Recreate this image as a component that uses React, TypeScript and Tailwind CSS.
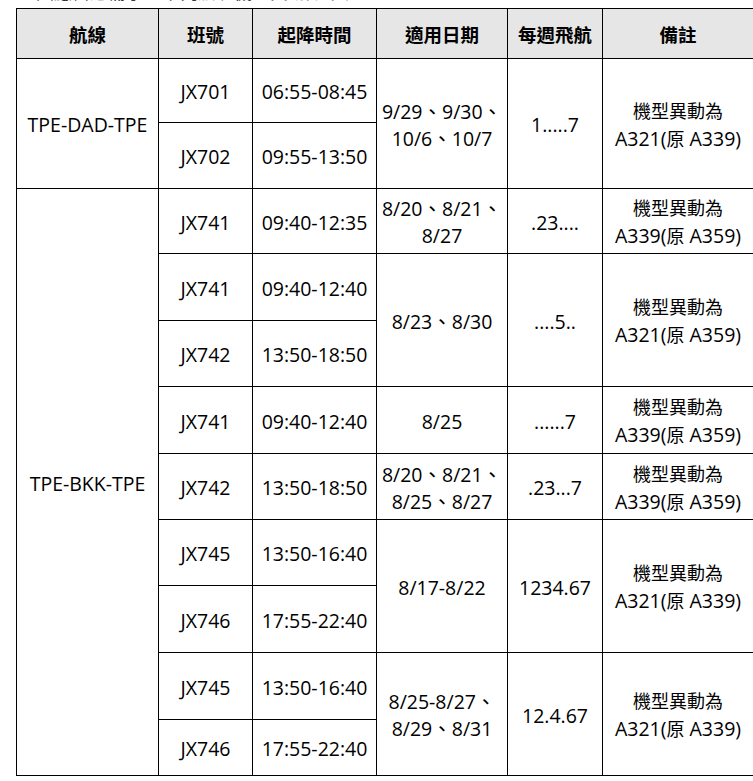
const font = { fontFamily: "'Open Sans', 'Noto Sans CJK TC', sans-serif" };

type Cell = { text: React.ReactNode; rowSpan?: number };

// CJK glyphs sit a little smaller than the Latin text in the source table
const C = ({ children }: { children: React.ReactNode }) => (
  <span className="text-[18px]">{children}</span>
);

const remark = (model: string, orig: string) => (
  <>
    <C>機型異動為</C>
    <br />
    {model}(<C>原</C> {orig})
  </>
);

const rowHeights = [64, 66, 65, 67, 66, 67, 66, 66, 67, 67, 56];

// each row lists only the cells that start in it (rowspans handled by the table)
const rows: Cell[][] = [
  [
    { text: 'TPE-DAD-TPE', rowSpan: 2 },
    { text: 'JX701' },
    { text: '06:55-08:45' },
    { text: <>9/29、9/30、<br />10/6、10/7</>, rowSpan: 2 },
    { text: '1.....7', rowSpan: 2 },
    { text: remark('A321', 'A339'), rowSpan: 2 },
  ],
  [{ text: 'JX702' }, { text: '09:55-13:50' }],
  [
    { text: 'TPE-BKK-TPE', rowSpan: 9 },
    { text: 'JX741' },
    { text: '09:40-12:35' },
    { text: <>8/20、8/21、<br />8/27</> },
    { text: '.23....' },
    { text: remark('A339', 'A359') },
  ],
  [
    { text: 'JX741' },
    { text: '09:40-12:40' },
    { text: '8/23、8/30', rowSpan: 2 },
    { text: '....5..', rowSpan: 2 },
    { text: remark('A321', 'A359'), rowSpan: 2 },
  ],
  [{ text: 'JX742' }, { text: '13:50-18:50' }],
  [
    { text: 'JX741' },
    { text: '09:40-12:40' },
    { text: '8/25' },
    { text: '......7' },
    { text: remark('A339', 'A359') },
  ],
  [
    { text: 'JX742' },
    { text: '13:50-18:50' },
    { text: <>8/20、8/21、<br />8/25、8/27</> },
    { text: '.23...7' },
    { text: remark('A339', 'A359') },
  ],
  [
    { text: 'JX745' },
    { text: '13:50-16:40' },
    { text: '8/17-8/22', rowSpan: 2 },
    { text: '1234.67', rowSpan: 2 },
    { text: remark('A321', 'A339'), rowSpan: 2 },
  ],
  [{ text: 'JX746' }, { text: '17:55-22:40' }],
  [
    { text: 'JX745' },
    { text: '13:50-16:40' },
    { text: <>8/25-8/27、<br />8/29、8/31</>, rowSpan: 2 },
    { text: '12.4.67', rowSpan: 2 },
    { text: remark('A321', 'A339'), rowSpan: 2 },
  ],
  [{ text: 'JX746' }, { text: '17:55-22:40' }],
];

const headers = ['航線', '班號', '起降時間', '適用日期', '每週飛航', '備註'];

export default function App() {
  return (
    <div className="w-[753px] h-[781px] overflow-hidden bg-white text-black" style={font}>
      {/* previous paragraph, mostly scrolled out of view */}
      <div className="h-[8px] overflow-hidden pl-[36px]">
        <p className="-mt-[20px] text-[18px] leading-[24px] text-[#333] whitespace-nowrap">
          因應營運需求，下列航班機型異動如<span className="text-[#3a6ea5]">下表：</span>
        </p>
      </div>

      <table className="ml-[16px] w-[737px] table-fixed border-collapse border border-black text-[19.5px] leading-[27px]">
        <colgroup>
          <col className="w-[142px]" />
          <col className="w-[94px]" />
          <col className="w-[124px]" />
          <col className="w-[131px]" />
          <col className="w-[95px]" />
          <col className="w-[151px]" />
        </colgroup>
        <thead>
          <tr className="h-[50px] bg-[#e6e6e6]">
            {headers.map((h) => (
              <th key={h} className="border border-black text-[18.5px] font-bold text-center align-middle p-0 pt-[2px]">
                {h}
              </th>
            ))}
          </tr>
        </thead>
        <tbody>
          {rows.map((cells, i) => (
            <tr key={i} style={{ height: rowHeights[i] }}>
              {cells.map((c, j) => (
                <td
                  key={j}
                  rowSpan={c.rowSpan}
                  className="border border-black text-center align-middle px-0 pt-[2px] whitespace-nowrap"
                >
                  {c.text}
                </td>
              ))}
            </tr>
          ))}
        </tbody>
      </table>

      <div className="mt-[5px] ml-[36px] w-[679px] h-[2px] bg-[#97845a]" />
    </div>
  );
}
